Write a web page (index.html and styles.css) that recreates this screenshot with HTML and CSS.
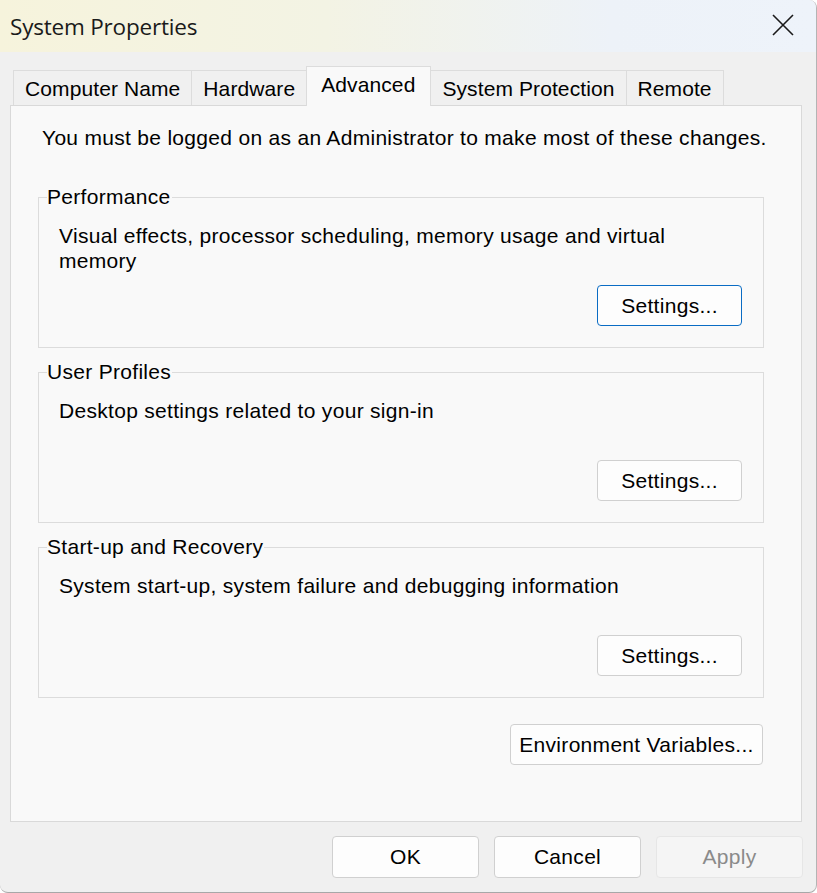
FILE: index.html
```html
<!DOCTYPE html>
<html>
<head>
<meta charset="utf-8">
<link rel="stylesheet" href="styles.css">
</head>
<body>
<div class="window">
  <div class="titlebar">
    <span class="title">System Properties</span>
    <span class="close">
      <svg width="22" height="22" viewBox="0 0 22 22"><path d="M1 1 L21 21 M21 1 L1 21" stroke="#1a1a1a" stroke-width="1.6" fill="none"/></svg>
    </span>
  </div>
  <div class="tabs">
    <div class="tab">Computer Name</div>
    <div class="tab">Hardware</div>
    <div class="tab active">Advanced</div>
    <div class="tab">System Protection</div>
    <div class="tab">Remote</div>
  </div>
  <div class="panel">
    <p class="note">You must be logged on as an Administrator to make most of these changes.</p>
    <fieldset class="group">
      <legend>Performance</legend>
      <p class="desc">Visual effects, processor scheduling, memory usage and virtual memory</p>
      <div class="btnrow"><button class="btn focus">Settings...</button></div>
    </fieldset>
    <fieldset class="group">
      <legend>User Profiles</legend>
      <p class="desc">Desktop settings related to your sign-in</p>
      <div class="btnrow"><button class="btn">Settings...</button></div>
    </fieldset>
    <fieldset class="group">
      <legend>Start-up and Recovery</legend>
      <p class="desc">System start-up, system failure and debugging information</p>
      <div class="btnrow"><button class="btn">Settings...</button></div>
    </fieldset>
    <div class="envrow"><button class="btn env">Environment Variables...</button></div>
  </div>
  <div class="footer">
    <button class="btn foot">OK</button>
    <button class="btn foot">Cancel</button>
    <button class="btn foot disabled">Apply</button>
  </div>
</div>
</body>
</html>
```
FILE: styles.css
```css
html, body {
  margin: 0;
  padding: 0;
  background: #ffffff;
}
.window {
  width: 817px;
  height: 893px;
  box-sizing: border-box;
  background: #f0f0f0;
  border-radius: 0 8px 8px 8px;
  border-right: 1px solid #b4b4b4;
  border-bottom: 1px solid #a8a8a8;
  overflow: hidden;
  font-family: "Liberation Sans", Arial, sans-serif;
  font-size: 21px;
  letter-spacing: 0.3px;
  color: #000;
}
.titlebar {
  height: 52px;
  display: flex;
  align-items: center;
  justify-content: space-between;
  background: linear-gradient(90deg, #f6f3dc 0%, #f3f3e4 40%, #edf2f8 75%, #eef3fa 100%);
}
.title {
  font-family: "Open Sans", "Noto Sans", sans-serif;
  font-size: 22.5px;
  padding-left: 10px;
  color: #1a1a1a;
  letter-spacing: -0.2px;
}
.close {
  display: flex;
  width: 22px;
  height: 22px;
  margin-right: 22px;
  margin-top: -2px;
}
.tabs {
  display: flex;
  align-items: flex-end;
  height: 53px;
  padding-left: 13px;
  box-sizing: border-box;
  position: relative;
  z-index: 1;
}
.tab {
  height: 35px;
  box-sizing: border-box;
  display: flex;
  align-items: center;
  padding: 2px 11px 0 11px;
  border: 1px solid #dcdcdc;
  border-bottom: none;
  border-right: none;
  background: #f0f0f0;
  letter-spacing: 0.1px;
}
.tab:last-child {
  border-right: 1px solid #dcdcdc;
}
.tab.active {
  height: 40px;
  background: #f9f9f9;
  margin-bottom: -1px;
  padding: 0 15px 4px 14px;
  border-right: 1px solid #dcdcdc;
}
.tab.active + .tab {
  border-left: none;
}
.panel {
  margin: 0 14px 0 10px;
  height: 717px;
  box-sizing: border-box;
  border: 1px solid #d9d9d9;
  background: #f9f9f9;
  padding: 19px 37px 0 27px;
}
.note {
  margin: 0 0 34px 4px;
  line-height: 26px;
  white-space: nowrap;
}
.group {
  margin: 0 0 12px 0;
  padding: 0 21px 21px 20px;
  border: 1px solid #dcdcdc;
  height: 163px;
  box-sizing: border-box;
  display: flex;
  flex-direction: column;
}
.group legend {
  padding: 0 1px 0 0;
  margin-left: -12px;
  line-height: 24px;
}
.desc {
  margin: 14px 0 0 0;
  line-height: 25px;
  padding-right: 50px;
}
.btnrow {
  margin-top: auto;
  display: flex;
  justify-content: flex-end;
}
.btn {
  font-family: "Liberation Sans", Arial, sans-serif;
  font-size: 21px;
  letter-spacing: 0.3px;
  color: #000;
  background: #fdfdfd;
  border: 1px solid #d0d0d0;
  border-radius: 4px;
  height: 41px;
  width: 145px;
  padding: 0;
}
.btn.focus {
  border: 1px solid #0a6cc4;
}
.envrow {
  display: flex;
  justify-content: flex-end;
  margin-top: 26px;
}
.btn.env {
  width: 253px;
  margin-right: 1px;
}
.footer {
  display: flex;
  justify-content: flex-end;
  gap: 15px;
  padding: 14px 13px 0 0;
}
.btn.foot {
  width: 147px;
  height: 42px;
}
.btn.disabled {
  background: #f5f5f5;
  border-color: #e6e6e6;
  color: #8a8a8a;
}
```
